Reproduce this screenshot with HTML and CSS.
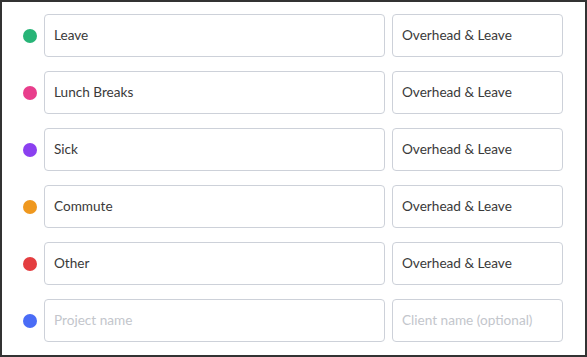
FILE: index.html
```html
<!DOCTYPE html>
<html lang="en">
<head>
    <meta charset="UTF-8">
    <meta name="viewport" content="width=device-width, initial-scale=1.0">
    <title>Projects</title>
    <link rel="stylesheet" href="styles.css">
</head>
<body>
    <main class="frame">
        <div class="row">
            <span class="dot green"></span>
            <input class="field project" type="text" value="Leave">
            <input class="field client" type="text" value="Overhead &amp; Leave">
        </div>
        <div class="row">
            <span class="dot pink"></span>
            <input class="field project" type="text" value="Lunch Breaks">
            <input class="field client" type="text" value="Overhead &amp; Leave">
        </div>
        <div class="row">
            <span class="dot purple"></span>
            <input class="field project" type="text" value="Sick">
            <input class="field client" type="text" value="Overhead &amp; Leave">
        </div>
        <div class="row">
            <span class="dot orange"></span>
            <input class="field project" type="text" value="Commute">
            <input class="field client" type="text" value="Overhead &amp; Leave">
        </div>
        <div class="row">
            <span class="dot red"></span>
            <input class="field project" type="text" value="Other">
            <input class="field client" type="text" value="Overhead &amp; Leave">
        </div>
        <div class="row">
            <span class="dot blue"></span>
            <input class="field project" type="text" placeholder="Project name">
            <input class="field client" type="text" placeholder="Client name (optional)">
        </div>
    </main>
</body>
</html>
```

FILE: styles.css
```css
*{
    box-sizing: border-box;
}

html, body{
    margin: 0;
    height: 100%;
}

body{
    background-color: #333;
    padding: 2px;
    font-family: Lato, "Noto Sans", sans-serif;
}

.frame{
    background-color: white;
    height: 100%;
    padding: 12px 22px 0 21px;
    display: flex;
    flex-direction: column;
    gap: 14px;
}

.row{
    display: flex;
    align-items: center;
    height: 43px;
}

.dot{
    width: 14px;
    height: 14px;
    border-radius: 50%;
    margin-right: 7px;
    flex-shrink: 0;
}

.green{ background-color: #27b477; }
.pink{ background-color: #e83e8c; }
.purple{ background-color: #8b40f0; }
.orange{ background-color: #ef981f; }
.red{ background-color: #e43d40; }
.blue{ background-color: #4a6cf6; }

.field{
    height: 43px;
    border: 1px solid #cdd1d9;
    border-radius: 4px;
    padding: 0 9px 2px 9px;
    font-family: inherit;
    font-size: 13.6px;
    color: #3a3a3a;
    background: white;
    outline: none;
}

.field::placeholder{
    color: #c3c6cc;
}

.project{
    width: 341px;
    margin-right: 7px;
}

.client{
    width: 171px;
}
```
